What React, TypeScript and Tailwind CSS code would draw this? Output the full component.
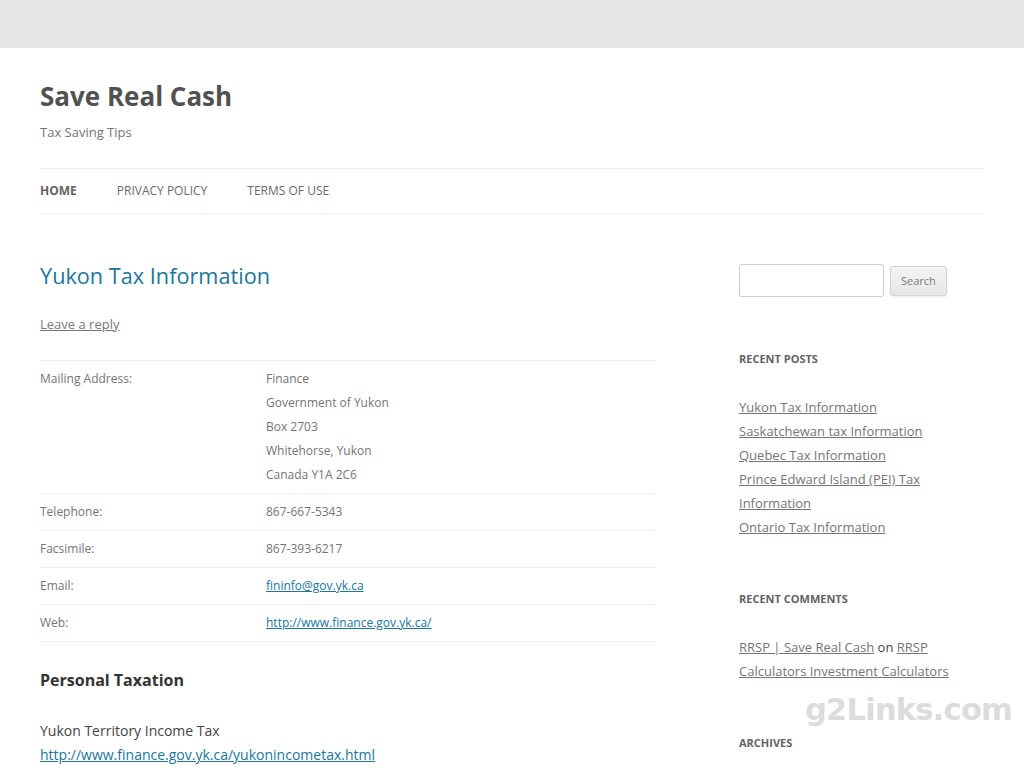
const font = { fontFamily: '"Open Sans", "Liberation Sans", sans-serif' };

const recentPosts = [
  "Yukon Tax Information",
  "Saskatchewan tax Information",
  "Quebec Tax Information",
  "Prince Edward Island (PEI) Tax Information",
  "Ontario Tax Information",
];

type Row = { label: string; lines: string[]; link?: boolean };

const rows: Row[] = [
  {
    label: "Mailing Address:",
    lines: ["Finance", "Government of Yukon", "Box 2703", "Whitehorse, Yukon", "Canada Y1A 2C6"],
  },
  { label: "Telephone:", lines: ["867-667-5343"] },
  { label: "Facsimile:", lines: ["867-393-6217"] },
  { label: "Email:", lines: ["fininfo@gov.yk.ca"], link: true },
  { label: "Web:", lines: ["http://www.finance.gov.yk.ca/"], link: true },
];

function WidgetTitle({ children }: { children: React.ReactNode }) {
  return (
    <h3 className="text-[11px] font-bold uppercase leading-6 text-[#636363]">{children}</h3>
  );
}

export default function App() {
  return (
    <div className="relative min-h-[768px] bg-[#e6e6e6] pt-12" style={font}>
      <div className="min-h-[720px] bg-white px-10">
        {/* header */}
        <header className="pt-6">
          <h1 className="text-[26px] font-bold leading-[48px] text-[#515151]">Save Real Cash</h1>
          <p className="text-[13px] leading-6 text-[#757575]">Tax Saving Tips</p>
          <nav className="mt-6 flex h-[46px] items-center gap-10 border-y border-[#ededed] text-[12px] uppercase text-[#6a6a6a]">
            <a className="font-bold text-[#636363]">Home</a>
            <a>Privacy Policy</a>
            <a>Terms of Use</a>
          </nav>
        </header>

        <div className="mt-[50px] flex justify-between">
          {/* primary */}
          <main className="w-[615px]">
            <h2 className="text-[21.7px] leading-[23px] text-[#21759b]">Yukon Tax Information</h2>
            <p className="mt-[25px] text-[13px] leading-6 text-[#777] underline">Leave a reply</p>

            <table className="mt-6 w-full border-b border-[#ededed] text-[12px] leading-6 text-[#757575]">
              <tbody>
                {rows.map((r) => (
                  <tr key={r.label} className="border-t border-[#ededed] align-top">
                    <td className="w-[226px] py-[6px]">{r.label}</td>
                    <td className="py-[6px]">
                      {r.lines.map((l) =>
                        r.link ? (
                          <a key={l} className="block text-[#21759b] underline">
                            {l}
                          </a>
                        ) : (
                          <div key={l}>{l}</div>
                        ),
                      )}
                    </td>
                  </tr>
                ))}
              </tbody>
            </table>

            <h3 className="mt-6 text-[16px] font-bold leading-[29px] text-[#333]">Personal Taxation</h3>
            <p className="mt-6 text-[14px] leading-6 text-[#444]">
              Yukon Territory Income Tax
              <br />
              <a className="text-[#21759b] underline">http://www.finance.gov.yk.ca/yukonincometax.html</a>
            </p>
          </main>

          {/* sidebar */}
          <aside className="w-[245px] text-[13px] leading-6 text-[#444]">
            <div className="flex items-center gap-[6px]">
              <input
                className="h-[33px] w-[145px] rounded-[3px] border border-[#ccc] px-[6px]"
                aria-label="Search"
              />
              <button className="h-[30px] rounded-[3px] border border-[#d2d2d2] bg-gradient-to-b from-[#f4f4f4] to-[#e6e6e6] px-[10px] text-[11px] text-[#7c7c7c] shadow-[0_1px_2px_rgba(64,64,64,0.1)]">
                Search
              </button>
            </div>

            <div className="mt-[50px]">
              <WidgetTitle>Recent Posts</WidgetTitle>
              <ul className="mt-6">
                {recentPosts.map((p) => (
                  <li key={p}>
                    <a className="text-[#757575] underline">{p}</a>
                  </li>
                ))}
              </ul>
            </div>

            <div className="mt-12">
              <WidgetTitle>Recent Comments</WidgetTitle>
              <p className="mt-6">
                <a className="text-[#757575] underline">RRSP | Save Real Cash</a>
                <span> on </span>
                <a className="text-[#757575] underline">RRSP Calculators Investment Calculators</a>
              </p>
            </div>

            <div className="mt-12">
              <WidgetTitle>Archives</WidgetTitle>
            </div>
          </aside>
        </div>
      </div>

      {/* watermark */}
      <div
        className="pointer-events-none absolute left-[805px] top-[687px] text-[30.5px] font-bold tracking-tight text-[#dcdcdc]"
        style={{ fontFamily: '"DejaVu Sans", sans-serif' }}
      >
        g2Links.com
      </div>
    </div>
  );
}
